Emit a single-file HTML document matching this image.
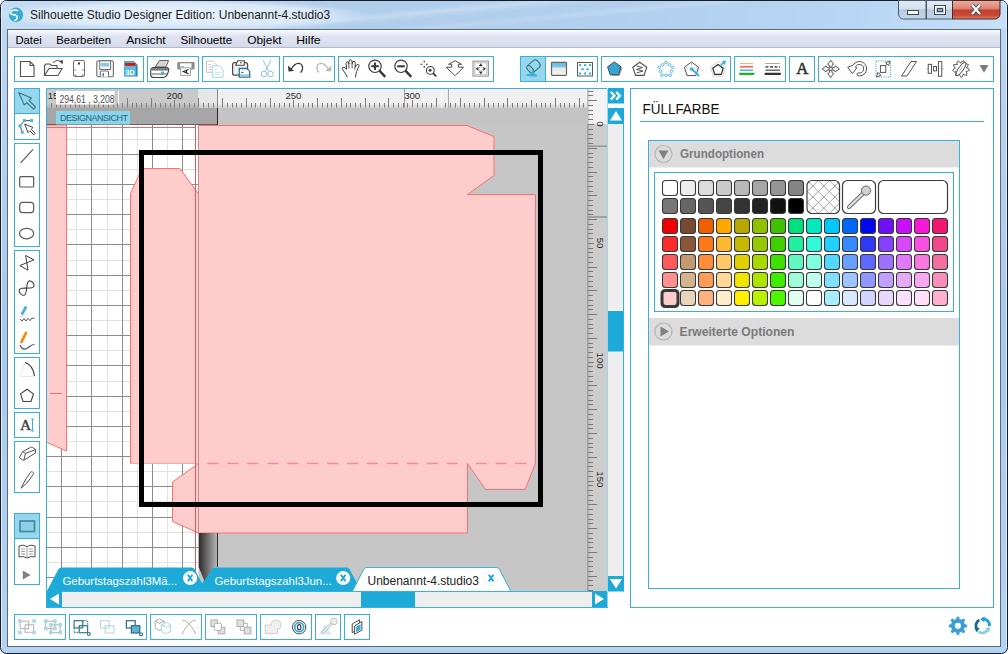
<!DOCTYPE html>
<html><head><meta charset="utf-8">
<style>
html,body{margin:0;padding:0;width:1008px;height:654px;overflow:hidden;background:#fff;}
body{position:relative;font-family:"Liberation Sans",sans-serif;}
svg{position:absolute;left:0;top:0;}
text{font-family:"Liberation Sans",sans-serif;}
</style></head><body>
<svg width="1008" height="654" viewBox="0 0 1008 654" shape-rendering="auto">
<defs>
<linearGradient id="frameG" x1="0" y1="0" x2="0" y2="1">
<stop offset="0" stop-color="#c2daf4"/><stop offset="0.05" stop-color="#bcd6f2"/><stop offset="0.5" stop-color="#a9c9ec"/><stop offset="1" stop-color="#b4d2f2"/>
</linearGradient>
<linearGradient id="titleG" x1="0" y1="0" x2="1" y2="0">
<stop offset="0" stop-color="#c4dcf4"/><stop offset="0.35" stop-color="#b0cdeb"/><stop offset="0.6" stop-color="#b2d0ee"/><stop offset="0.85" stop-color="#b8d6f4"/><stop offset="1" stop-color="#c8e0f8"/>
</linearGradient>
<linearGradient id="streakG" x1="0" y1="0" x2="1" y2="0.3" gradientUnits="objectBoundingBox">
<stop offset="0" stop-color="#fff" stop-opacity="0"/><stop offset="0.45" stop-color="#fff" stop-opacity="0"/><stop offset="0.5" stop-color="#fff" stop-opacity="0.25"/><stop offset="0.56" stop-color="#fff" stop-opacity="0"/>
<stop offset="0.62" stop-color="#fff" stop-opacity="0.0"/><stop offset="0.66" stop-color="#fff" stop-opacity="0.15"/><stop offset="0.7" stop-color="#fff" stop-opacity="0"/><stop offset="1" stop-color="#fff" stop-opacity="0"/>
</linearGradient>
<radialGradient id="glowG"><stop offset="0" stop-color="#f0f7fe" stop-opacity="0.9"/><stop offset="0.75" stop-color="#e6f1fc" stop-opacity="0.75"/><stop offset="1" stop-color="#e4f0fc" stop-opacity="0"/></radialGradient>
<linearGradient id="menuG" x1="0" y1="0" x2="0" y2="1">
<stop offset="0" stop-color="#fcfcfe"/><stop offset="0.35" stop-color="#dfe3f1"/><stop offset="1" stop-color="#d5daeb"/>
</linearGradient>
<linearGradient id="bladeG" x1="0" y1="0" x2="1" y2="0">
<stop offset="0" stop-color="#2a2a2a"/><stop offset="1" stop-color="#b8b8b8"/>
</linearGradient>
<linearGradient id="rulShadow" x1="0" y1="0" x2="0" y2="1">
<stop offset="0" stop-color="#000" stop-opacity="0"/><stop offset="1" stop-color="#000" stop-opacity="0.12"/>
</linearGradient>
<linearGradient id="vrulShadow" x1="0" y1="0" x2="1" y2="0">
<stop offset="0" stop-color="#000" stop-opacity="0.25"/><stop offset="1" stop-color="#000" stop-opacity="0"/>
</linearGradient>
<pattern id="hatch" width="11" height="11" patternUnits="userSpaceOnUse" x="812.8" y="186">
<rect width="11" height="11" fill="#fff"/><path d="M0 0L11 11M11 0L0 11" stroke="#8c8c8c" stroke-width="0.8"/>
</pattern>
<clipPath id="cvClip"><rect x="47" y="89" width="560" height="502"/></clipPath>
<clipPath id="pageClip"><rect x="47" y="125" width="540" height="466"/></clipPath>
</defs>

<rect x="0.5" y="0.5" width="1007" height="653" rx="6" fill="url(#frameG)" stroke="#141c26"/>
<rect x="1" y="1" width="1006" height="28" rx="5" fill="url(#titleG)"/>
<rect x="1" y="1" width="1006" height="28" rx="5" fill="url(#streakG)"/>
<ellipse cx="180" cy="15" rx="190" ry="15" fill="url(#glowG)"/>
<line x1="1.5" y1="6" x2="1.5" y2="648" stroke="#e2eefa"/>
<line x1="1006.5" y1="6" x2="1006.5" y2="648" stroke="#e2eefa"/>
<rect x="7.5" y="29.5" width="993" height="617" fill="#fff" stroke="#5a6a7a"/>
<circle cx="16" cy="14.8" r="7.2" fill="#3cadd2"/>
<path d="M17.6 10.5 C13.5 9.4 10.2 10.8 10.2 12.7 C10.4 14.3 13 14.7 15 15.1 C17.4 15.7 17.9 17.4 16.9 18.7 C16.3 19.5 15.6 20 15 20.4" stroke="#fff" stroke-width="1.5" fill="none" stroke-linecap="round"/>
<text x="30" y="18.7" font-size="12" fill="#1a1a1a">Silhouette Studio Designer Edition: Unbenannt-4.studio3</text>

<g>
<defs>
<linearGradient id="minG" x1="0" y1="0" x2="0" y2="1"><stop offset="0" stop-color="#e4ecf6"/><stop offset="0.45" stop-color="#d4e0ee"/><stop offset="0.5" stop-color="#b8cade"/><stop offset="1" stop-color="#c4d6ea"/></linearGradient>
<linearGradient id="closeG" x1="0" y1="0" x2="0" y2="1"><stop offset="0" stop-color="#eab0a4"/><stop offset="0.45" stop-color="#dc8070"/><stop offset="0.52" stop-color="#c4402c"/><stop offset="0.8" stop-color="#c84a34"/><stop offset="1" stop-color="#e08068"/></linearGradient>
</defs>
<path d="M898.5 0.5 V14 a5 5 0 0 0 5 5 H926 V0.5 Z" fill="url(#minG)" stroke="#4a5a6c"/>
<rect x="926.5" y="0.5" width="26" height="18.5" fill="url(#minG)" stroke="#4a5a6c"/>
<path d="M952.5 0.5 V19 H995 a5 5 0 0 0 5 -5 V0.5 Z" fill="url(#closeG)" stroke="#4a2a24"/>
<rect x="907.5" y="10.5" width="11" height="4" fill="#fff" stroke="#3c4a5a"/>
<rect x="934.5" y="5.5" width="11" height="9" fill="none" stroke="#3c4a5a" stroke-width="1"/>
<rect x="935.5" y="6.5" width="9" height="7" fill="none" stroke="#fff" stroke-width="1"/>
<rect x="937.5" y="8.5" width="5" height="3" fill="#9aaabc" stroke="#3c4a5a"/>
<path d="M972 5 L980 14 M980 5 L972 14" stroke="#3c3c4c" stroke-width="4"/>
<path d="M972 5 L980 14 M980 5 L972 14" stroke="#fff" stroke-width="2.4"/>
</g>

<rect x="8" y="30" width="992" height="18" fill="url(#menuG)"/>
<line x1="8" y1="47.5" x2="1000" y2="47.5" stroke="#b6bbcb"/>
<g font-size="11.3" fill="#000">
<text x="15.5" y="43.5" textLength="26.2" lengthAdjust="spacingAndGlyphs">Datei</text>
<text x="56.2" y="43.5" textLength="54.8" lengthAdjust="spacingAndGlyphs">Bearbeiten</text>
<text x="126.2" y="43.5" textLength="39.5" lengthAdjust="spacingAndGlyphs">Ansicht</text>
<text x="180.5" y="43.5" textLength="51.8" lengthAdjust="spacingAndGlyphs">Silhouette</text>
<text x="247.2" y="43.5" textLength="34.5" lengthAdjust="spacingAndGlyphs">Objekt</text>
<text x="296.2" y="43.5" textLength="24.5" lengthAdjust="spacingAndGlyphs">Hilfe</text>
</g>

<rect x="14.5" y="56.5" width="129" height="25" fill="none" stroke="#3aafd9"/>
<rect x="147.5" y="56.5" width="51" height="25" fill="none" stroke="#3aafd9"/>
<rect x="202.5" y="56.5" width="77" height="25" fill="none" stroke="#3aafd9"/>
<rect x="283.5" y="56.5" width="51" height="25" fill="none" stroke="#3aafd9"/>
<rect x="338.5" y="56.5" width="155" height="25" fill="none" stroke="#3aafd9"/>
<rect x="520.5" y="56.5" width="77" height="25" fill="none" stroke="#3aafd9"/>
<rect x="601.5" y="56.5" width="129" height="25" fill="none" stroke="#3aafd9"/>
<rect x="734.5" y="56.5" width="51" height="25" fill="none" stroke="#3aafd9"/>
<rect x="789.5" y="56.5" width="25" height="25" fill="none" stroke="#3aafd9"/>
<rect x="818.5" y="56.5" width="175" height="25" fill="none" stroke="#3aafd9"/>
<rect x="521" y="57" width="24" height="24" fill="#96d7ee"/><line x1="545.5" y1="57" x2="545.5" y2="81" stroke="#3aafd9"/>
<rect x="14.5" y="88.5" width="25" height="51" fill="none" stroke="#3aafd9"/>
<rect x="14.5" y="143.5" width="25" height="103" fill="none" stroke="#3aafd9"/>
<rect x="14.5" y="250.5" width="25" height="103" fill="none" stroke="#3aafd9"/>
<rect x="14.5" y="357.5" width="25" height="51" fill="none" stroke="#3aafd9"/>
<rect x="14.5" y="412.5" width="25" height="25" fill="none" stroke="#3aafd9"/>
<rect x="14.5" y="441.5" width="25" height="51" fill="none" stroke="#3aafd9"/>
<rect x="14.5" y="513.5" width="25" height="71" fill="none" stroke="#3aafd9"/>
<rect x="15" y="89" width="24" height="24" fill="#96d7ee"/><line x1="15" y1="113.5" x2="39" y2="113.5" stroke="#3aafd9"/>
<rect x="15" y="514" width="24" height="24" fill="#96d7ee"/><line x1="15" y1="538.5" x2="39" y2="538.5" stroke="#3aafd9"/>
<rect x="14.5" y="614.5" width="51" height="25" fill="none" stroke="#3aafd9"/>
<rect x="69.5" y="614.5" width="77" height="25" fill="none" stroke="#3aafd9"/>
<rect x="150.5" y="614.5" width="51" height="25" fill="none" stroke="#3aafd9"/>
<rect x="205.5" y="614.5" width="51" height="25" fill="none" stroke="#3aafd9"/>
<rect x="260.5" y="614.5" width="51" height="25" fill="none" stroke="#3aafd9"/>
<rect x="315.5" y="614.5" width="25" height="25" fill="none" stroke="#3aafd9"/>
<rect x="344.5" y="614.5" width="25" height="25" fill="none" stroke="#3aafd9"/>
<g clip-path="url(#cvClip)">
<rect x="47" y="89" width="560" height="502" fill="#c6c6c6"/>
<rect x="47" y="125" width="151.5" height="466" fill="#fff"/>
<g clip-path="url(#pageClip)">
<line x1="46.5" y1="125" x2="46.5" y2="591" stroke="#e2e2e2"/>
<line x1="76.5" y1="125" x2="76.5" y2="591" stroke="#e2e2e2"/>
<line x1="107.5" y1="125" x2="107.5" y2="591" stroke="#e2e2e2"/>
<line x1="137.5" y1="125" x2="137.5" y2="591" stroke="#e2e2e2"/>
<line x1="167.5" y1="125" x2="167.5" y2="591" stroke="#e2e2e2"/>
<line x1="198.5" y1="125" x2="198.5" y2="591" stroke="#e2e2e2"/>
<line x1="47" y1="139.5" x2="198.5" y2="139.5" stroke="#e2e2e2"/>
<line x1="47" y1="169.5" x2="198.5" y2="169.5" stroke="#e2e2e2"/>
<line x1="47" y1="199.5" x2="198.5" y2="199.5" stroke="#e2e2e2"/>
<line x1="47" y1="229.5" x2="198.5" y2="229.5" stroke="#e2e2e2"/>
<line x1="47" y1="260.5" x2="198.5" y2="260.5" stroke="#e2e2e2"/>
<line x1="47" y1="290.5" x2="198.5" y2="290.5" stroke="#e2e2e2"/>
<line x1="47" y1="320.5" x2="198.5" y2="320.5" stroke="#e2e2e2"/>
<line x1="47" y1="350.5" x2="198.5" y2="350.5" stroke="#e2e2e2"/>
<line x1="47" y1="381.5" x2="198.5" y2="381.5" stroke="#e2e2e2"/>
<line x1="47" y1="411.5" x2="198.5" y2="411.5" stroke="#e2e2e2"/>
<line x1="47" y1="441.5" x2="198.5" y2="441.5" stroke="#e2e2e2"/>
<line x1="47" y1="471.5" x2="198.5" y2="471.5" stroke="#e2e2e2"/>
<line x1="47" y1="501.5" x2="198.5" y2="501.5" stroke="#e2e2e2"/>
<line x1="47" y1="532.5" x2="198.5" y2="532.5" stroke="#e2e2e2"/>
<line x1="47" y1="562.5" x2="198.5" y2="562.5" stroke="#e2e2e2"/>
<line x1="61.5" y1="125" x2="61.5" y2="591" stroke="#8c8c8c"/>
<line x1="91.5" y1="125" x2="91.5" y2="591" stroke="#8c8c8c"/>
<line x1="122.5" y1="125" x2="122.5" y2="591" stroke="#8c8c8c"/>
<line x1="152.5" y1="125" x2="152.5" y2="591" stroke="#8c8c8c"/>
<line x1="182.5" y1="125" x2="182.5" y2="591" stroke="#8c8c8c"/>
<line x1="47" y1="124.5" x2="198.5" y2="124.5" stroke="#8c8c8c"/>
<line x1="47" y1="154.5" x2="198.5" y2="154.5" stroke="#8c8c8c"/>
<line x1="47" y1="184.5" x2="198.5" y2="184.5" stroke="#8c8c8c"/>
<line x1="47" y1="214.5" x2="198.5" y2="214.5" stroke="#8c8c8c"/>
<line x1="47" y1="244.5" x2="198.5" y2="244.5" stroke="#8c8c8c"/>
<line x1="47" y1="275.5" x2="198.5" y2="275.5" stroke="#8c8c8c"/>
<line x1="47" y1="305.5" x2="198.5" y2="305.5" stroke="#8c8c8c"/>
<line x1="47" y1="335.5" x2="198.5" y2="335.5" stroke="#8c8c8c"/>
<line x1="47" y1="365.5" x2="198.5" y2="365.5" stroke="#8c8c8c"/>
<line x1="47" y1="396.5" x2="198.5" y2="396.5" stroke="#8c8c8c"/>
<line x1="47" y1="426.5" x2="198.5" y2="426.5" stroke="#8c8c8c"/>
<line x1="47" y1="456.5" x2="198.5" y2="456.5" stroke="#8c8c8c"/>
<line x1="47" y1="486.5" x2="198.5" y2="486.5" stroke="#8c8c8c"/>
<line x1="47" y1="517.5" x2="198.5" y2="517.5" stroke="#8c8c8c"/>
<line x1="47" y1="547.5" x2="198.5" y2="547.5" stroke="#8c8c8c"/>
<line x1="47" y1="577.5" x2="198.5" y2="577.5" stroke="#8c8c8c"/>
</g>
<line x1="47" y1="124.5" x2="198" y2="124.5" stroke="#707070"/>
<path d="M40 125 H66.5 V451 L47 442.5 H40 Z" fill="#ffcccc" stroke="#ff7070" stroke-width="1"/>
<path d="M47 127.5 H195.5 V591" fill="none" stroke="#ff6060" stroke-width="1"/>
<line x1="50" y1="393.5" x2="62" y2="393.5" stroke="#ff7070" stroke-width="1"/>
<path d="M130.5 463.5 V193.5 L142 168.5 H180 L198.5 194 V463.5" fill="#ffcccc" stroke="#ff7070" stroke-width="1"/>
<line x1="130" y1="463.5" x2="198.5" y2="463.5" stroke="#ffa8a8" stroke-width="1"/>
<path d="M172.5 482 L198.5 463.5 V533 L172.5 521.5 Z" fill="#ffcccc" stroke="#ff7070" stroke-width="1"/>
<path d="M198.5 125.5 H467 L494 136.5 V175.5 L467.5 194.5 H535.5 V463.5 L525 489.5 H485.5 L467.5 463.5 V533 H198.5 Z" fill="#ffcccc" stroke="#ff7070" stroke-width="1"/>
<line x1="198.5" y1="125" x2="198.5" y2="533" stroke="#c09090" stroke-width="1"/>
<line x1="198.5" y1="463.5" x2="467.25" y2="463.5" stroke="#ff8a8a" stroke-width="1.4" stroke-dasharray="11 8.95" stroke-dashoffset="11"/>
<line x1="467.25" y1="463.5" x2="535" y2="463.5" stroke="#ff8a8a" stroke-width="1.4" stroke-dasharray="11 8.65" stroke-dashoffset="11"/>
<line x1="195.5" y1="125" x2="195.5" y2="591" stroke="#ff5050" stroke-width="1"/>
<rect x="141.5" y="152.5" width="399" height="352" fill="none" stroke="#000" stroke-width="5"/>
<rect x="47" y="89" width="540" height="19" fill="#f0f0f0"/>
<rect x="47" y="89" width="151.5" height="19" fill="#c9c9c9"/>
<rect x="198.5" y="89" width="19" height="19" fill="#e6e6e6"/>
<rect x="47" y="103" width="540" height="5" fill="url(#rulShadow)"/>
<line x1="51.5" y1="103" x2="51.5" y2="107.5" stroke="#7c7c7c"/>
<line x1="56.5" y1="100" x2="56.5" y2="107.5" stroke="#7c7c7c"/>
<line x1="60.5" y1="103" x2="60.5" y2="107.5" stroke="#7c7c7c"/>
<line x1="65.5" y1="103" x2="65.5" y2="107.5" stroke="#7c7c7c"/>
<line x1="70.5" y1="103" x2="70.5" y2="107.5" stroke="#7c7c7c"/>
<line x1="75.5" y1="103" x2="75.5" y2="107.5" stroke="#7c7c7c"/>
<line x1="79.5" y1="98" x2="79.5" y2="107.5" stroke="#7c7c7c"/>
<line x1="84.5" y1="103" x2="84.5" y2="107.5" stroke="#7c7c7c"/>
<line x1="89.5" y1="103" x2="89.5" y2="107.5" stroke="#7c7c7c"/>
<line x1="94.5" y1="103" x2="94.5" y2="107.5" stroke="#7c7c7c"/>
<line x1="98.5" y1="103" x2="98.5" y2="107.5" stroke="#7c7c7c"/>
<line x1="103.5" y1="98" x2="103.5" y2="107.5" stroke="#7c7c7c"/>
<line x1="108.5" y1="103" x2="108.5" y2="107.5" stroke="#7c7c7c"/>
<line x1="113.5" y1="103" x2="113.5" y2="107.5" stroke="#7c7c7c"/>
<line x1="117.5" y1="103" x2="117.5" y2="107.5" stroke="#7c7c7c"/>
<line x1="122.5" y1="103" x2="122.5" y2="107.5" stroke="#7c7c7c"/>
<line x1="127.5" y1="98" x2="127.5" y2="107.5" stroke="#7c7c7c"/>
<line x1="132.5" y1="103" x2="132.5" y2="107.5" stroke="#7c7c7c"/>
<line x1="136.5" y1="103" x2="136.5" y2="107.5" stroke="#7c7c7c"/>
<line x1="141.5" y1="103" x2="141.5" y2="107.5" stroke="#7c7c7c"/>
<line x1="146.5" y1="103" x2="146.5" y2="107.5" stroke="#7c7c7c"/>
<line x1="151.5" y1="98" x2="151.5" y2="107.5" stroke="#7c7c7c"/>
<line x1="155.5" y1="103" x2="155.5" y2="107.5" stroke="#7c7c7c"/>
<line x1="160.5" y1="103" x2="160.5" y2="107.5" stroke="#7c7c7c"/>
<line x1="165.5" y1="103" x2="165.5" y2="107.5" stroke="#7c7c7c"/>
<line x1="170.5" y1="103" x2="170.5" y2="107.5" stroke="#7c7c7c"/>
<line x1="174.5" y1="100" x2="174.5" y2="107.5" stroke="#7c7c7c"/>
<line x1="179.5" y1="103" x2="179.5" y2="107.5" stroke="#7c7c7c"/>
<line x1="184.5" y1="103" x2="184.5" y2="107.5" stroke="#7c7c7c"/>
<line x1="189.5" y1="103" x2="189.5" y2="107.5" stroke="#7c7c7c"/>
<line x1="194.5" y1="103" x2="194.5" y2="107.5" stroke="#7c7c7c"/>
<line x1="198.5" y1="98" x2="198.5" y2="107.5" stroke="#7c7c7c"/>
<line x1="203.5" y1="103" x2="203.5" y2="107.5" stroke="#7c7c7c"/>
<line x1="208.5" y1="103" x2="208.5" y2="107.5" stroke="#7c7c7c"/>
<line x1="213.5" y1="103" x2="213.5" y2="107.5" stroke="#7c7c7c"/>
<line x1="217.5" y1="103" x2="217.5" y2="107.5" stroke="#7c7c7c"/>
<line x1="222.5" y1="98" x2="222.5" y2="107.5" stroke="#7c7c7c"/>
<line x1="227.5" y1="103" x2="227.5" y2="107.5" stroke="#7c7c7c"/>
<line x1="232.5" y1="103" x2="232.5" y2="107.5" stroke="#7c7c7c"/>
<line x1="236.5" y1="103" x2="236.5" y2="107.5" stroke="#7c7c7c"/>
<line x1="241.5" y1="103" x2="241.5" y2="107.5" stroke="#7c7c7c"/>
<line x1="246.5" y1="98" x2="246.5" y2="107.5" stroke="#7c7c7c"/>
<line x1="251.5" y1="103" x2="251.5" y2="107.5" stroke="#7c7c7c"/>
<line x1="255.5" y1="103" x2="255.5" y2="107.5" stroke="#7c7c7c"/>
<line x1="260.5" y1="103" x2="260.5" y2="107.5" stroke="#7c7c7c"/>
<line x1="265.5" y1="103" x2="265.5" y2="107.5" stroke="#7c7c7c"/>
<line x1="270.5" y1="98" x2="270.5" y2="107.5" stroke="#7c7c7c"/>
<line x1="274.5" y1="103" x2="274.5" y2="107.5" stroke="#7c7c7c"/>
<line x1="279.5" y1="103" x2="279.5" y2="107.5" stroke="#7c7c7c"/>
<line x1="284.5" y1="103" x2="284.5" y2="107.5" stroke="#7c7c7c"/>
<line x1="289.5" y1="103" x2="289.5" y2="107.5" stroke="#7c7c7c"/>
<line x1="293.5" y1="100" x2="293.5" y2="107.5" stroke="#7c7c7c"/>
<line x1="298.5" y1="103" x2="298.5" y2="107.5" stroke="#7c7c7c"/>
<line x1="303.5" y1="103" x2="303.5" y2="107.5" stroke="#7c7c7c"/>
<line x1="308.5" y1="103" x2="308.5" y2="107.5" stroke="#7c7c7c"/>
<line x1="312.5" y1="103" x2="312.5" y2="107.5" stroke="#7c7c7c"/>
<line x1="317.5" y1="98" x2="317.5" y2="107.5" stroke="#7c7c7c"/>
<line x1="322.5" y1="103" x2="322.5" y2="107.5" stroke="#7c7c7c"/>
<line x1="327.5" y1="103" x2="327.5" y2="107.5" stroke="#7c7c7c"/>
<line x1="331.5" y1="103" x2="331.5" y2="107.5" stroke="#7c7c7c"/>
<line x1="336.5" y1="103" x2="336.5" y2="107.5" stroke="#7c7c7c"/>
<line x1="341.5" y1="98" x2="341.5" y2="107.5" stroke="#7c7c7c"/>
<line x1="346.5" y1="103" x2="346.5" y2="107.5" stroke="#7c7c7c"/>
<line x1="350.5" y1="103" x2="350.5" y2="107.5" stroke="#7c7c7c"/>
<line x1="355.5" y1="103" x2="355.5" y2="107.5" stroke="#7c7c7c"/>
<line x1="360.5" y1="103" x2="360.5" y2="107.5" stroke="#7c7c7c"/>
<line x1="365.5" y1="98" x2="365.5" y2="107.5" stroke="#7c7c7c"/>
<line x1="369.5" y1="103" x2="369.5" y2="107.5" stroke="#7c7c7c"/>
<line x1="374.5" y1="103" x2="374.5" y2="107.5" stroke="#7c7c7c"/>
<line x1="379.5" y1="103" x2="379.5" y2="107.5" stroke="#7c7c7c"/>
<line x1="384.5" y1="103" x2="384.5" y2="107.5" stroke="#7c7c7c"/>
<line x1="388.5" y1="98" x2="388.5" y2="107.5" stroke="#7c7c7c"/>
<line x1="393.5" y1="103" x2="393.5" y2="107.5" stroke="#7c7c7c"/>
<line x1="398.5" y1="103" x2="398.5" y2="107.5" stroke="#7c7c7c"/>
<line x1="403.5" y1="103" x2="403.5" y2="107.5" stroke="#7c7c7c"/>
<line x1="407.5" y1="103" x2="407.5" y2="107.5" stroke="#7c7c7c"/>
<line x1="412.5" y1="100" x2="412.5" y2="107.5" stroke="#7c7c7c"/>
<line x1="417.5" y1="103" x2="417.5" y2="107.5" stroke="#7c7c7c"/>
<line x1="422.5" y1="103" x2="422.5" y2="107.5" stroke="#7c7c7c"/>
<line x1="426.5" y1="103" x2="426.5" y2="107.5" stroke="#7c7c7c"/>
<line x1="431.5" y1="103" x2="431.5" y2="107.5" stroke="#7c7c7c"/>
<line x1="436.5" y1="98" x2="436.5" y2="107.5" stroke="#7c7c7c"/>
<line x1="441.5" y1="103" x2="441.5" y2="107.5" stroke="#7c7c7c"/>
<line x1="445.5" y1="103" x2="445.5" y2="107.5" stroke="#7c7c7c"/>
<line x1="450.5" y1="103" x2="450.5" y2="107.5" stroke="#7c7c7c"/>
<line x1="455.5" y1="103" x2="455.5" y2="107.5" stroke="#7c7c7c"/>
<line x1="460.5" y1="98" x2="460.5" y2="107.5" stroke="#7c7c7c"/>
<line x1="464.5" y1="103" x2="464.5" y2="107.5" stroke="#7c7c7c"/>
<line x1="469.5" y1="103" x2="469.5" y2="107.5" stroke="#7c7c7c"/>
<line x1="474.5" y1="103" x2="474.5" y2="107.5" stroke="#7c7c7c"/>
<line x1="479.5" y1="103" x2="479.5" y2="107.5" stroke="#7c7c7c"/>
<line x1="484.5" y1="98" x2="484.5" y2="107.5" stroke="#7c7c7c"/>
<line x1="488.5" y1="103" x2="488.5" y2="107.5" stroke="#7c7c7c"/>
<line x1="493.5" y1="103" x2="493.5" y2="107.5" stroke="#7c7c7c"/>
<line x1="498.5" y1="103" x2="498.5" y2="107.5" stroke="#7c7c7c"/>
<line x1="503.5" y1="103" x2="503.5" y2="107.5" stroke="#7c7c7c"/>
<line x1="507.5" y1="98" x2="507.5" y2="107.5" stroke="#7c7c7c"/>
<line x1="512.5" y1="103" x2="512.5" y2="107.5" stroke="#7c7c7c"/>
<line x1="517.5" y1="103" x2="517.5" y2="107.5" stroke="#7c7c7c"/>
<line x1="522.5" y1="103" x2="522.5" y2="107.5" stroke="#7c7c7c"/>
<line x1="526.5" y1="103" x2="526.5" y2="107.5" stroke="#7c7c7c"/>
<line x1="531.5" y1="100" x2="531.5" y2="107.5" stroke="#7c7c7c"/>
<line x1="536.5" y1="103" x2="536.5" y2="107.5" stroke="#7c7c7c"/>
<line x1="541.5" y1="103" x2="541.5" y2="107.5" stroke="#7c7c7c"/>
<line x1="545.5" y1="103" x2="545.5" y2="107.5" stroke="#7c7c7c"/>
<line x1="550.5" y1="103" x2="550.5" y2="107.5" stroke="#7c7c7c"/>
<line x1="555.5" y1="98" x2="555.5" y2="107.5" stroke="#7c7c7c"/>
<line x1="560.5" y1="103" x2="560.5" y2="107.5" stroke="#7c7c7c"/>
<line x1="564.5" y1="103" x2="564.5" y2="107.5" stroke="#7c7c7c"/>
<line x1="569.5" y1="103" x2="569.5" y2="107.5" stroke="#7c7c7c"/>
<line x1="574.5" y1="103" x2="574.5" y2="107.5" stroke="#7c7c7c"/>
<line x1="579.5" y1="98" x2="579.5" y2="107.5" stroke="#7c7c7c"/>
<line x1="583.5" y1="103" x2="583.5" y2="107.5" stroke="#7c7c7c"/>
<line x1="588.5" y1="103" x2="588.5" y2="107.5" stroke="#7c7c7c"/>
<line x1="404.5" y1="89" x2="404.5" y2="108" stroke="#a0a0a0"/><line x1="441.5" y1="89" x2="441.5" y2="108" stroke="#fff"/><line x1="448.5" y1="89" x2="448.5" y2="108" stroke="#a8a8a8"/>
<g font-size="9.6" fill="#2a2a2a" text-anchor="middle">
<text x="174.6" y="99" >200</text>
<text x="293.4" y="99" >250</text>
<text x="412.2" y="99" >300</text>
<text x="55.8" y="99" >150</text>
</g>
<rect x="47" y="108" width="540" height="17" fill="#c4c4c4"/>
<rect x="47" y="108" width="170.5" height="16" fill="#a6a6a6"/>
<line x1="47" y1="124.5" x2="217" y2="124.5" stroke="#606060"/>
<line x1="217.5" y1="89" x2="217.5" y2="108" stroke="#8a8a8a"/>
<line x1="217.5" y1="108" x2="217.5" y2="125" stroke="#282828"/>
<rect x="56" y="91" width="58.5" height="13.5" fill="#fff"/>
<line x1="118.5" y1="91" x2="118.5" y2="104.5" stroke="#fff"/>
<text x="59.5" y="103" font-size="10" fill="#505050" textLength="55" lengthAdjust="spacingAndGlyphs">294,61 , 3,208</text>
<rect x="56" y="111" width="74" height="13.5" fill="#8ad4ec"/>
<text x="60" y="121" font-size="9" fill="#2a6272" textLength="68" lengthAdjust="spacing">DESIGNANSICHT</text>
<rect x="587" y="89" width="20" height="502" fill="#cdcdcd"/>
<rect x="587" y="89" width="20" height="35" fill="#f3f3f3"/>
<rect x="587" y="89" width="3" height="502" fill="url(#vrulShadow)"/>
<line x1="588" y1="91.5" x2="593" y2="91.5" stroke="#787878"/>
<line x1="588" y1="95.5" x2="593" y2="95.5" stroke="#787878"/>
<line x1="588" y1="100.5" x2="597" y2="100.5" stroke="#787878"/>
<line x1="588" y1="105.5" x2="593" y2="105.5" stroke="#787878"/>
<line x1="588" y1="110.5" x2="593" y2="110.5" stroke="#787878"/>
<line x1="588" y1="114.5" x2="593" y2="114.5" stroke="#787878"/>
<line x1="588" y1="119.5" x2="593" y2="119.5" stroke="#787878"/>
<line x1="588" y1="124.5" x2="594" y2="124.5" stroke="#787878"/>
<line x1="588" y1="129.5" x2="593" y2="129.5" stroke="#787878"/>
<line x1="588" y1="134.5" x2="593" y2="134.5" stroke="#787878"/>
<line x1="588" y1="138.5" x2="593" y2="138.5" stroke="#787878"/>
<line x1="588" y1="143.5" x2="593" y2="143.5" stroke="#787878"/>
<line x1="588" y1="148.5" x2="597" y2="148.5" stroke="#787878"/>
<line x1="588" y1="153.5" x2="593" y2="153.5" stroke="#787878"/>
<line x1="588" y1="157.5" x2="593" y2="157.5" stroke="#787878"/>
<line x1="588" y1="162.5" x2="593" y2="162.5" stroke="#787878"/>
<line x1="588" y1="167.5" x2="593" y2="167.5" stroke="#787878"/>
<line x1="588" y1="172.5" x2="597" y2="172.5" stroke="#787878"/>
<line x1="588" y1="176.5" x2="593" y2="176.5" stroke="#787878"/>
<line x1="588" y1="181.5" x2="593" y2="181.5" stroke="#787878"/>
<line x1="588" y1="186.5" x2="593" y2="186.5" stroke="#787878"/>
<line x1="588" y1="191.5" x2="593" y2="191.5" stroke="#787878"/>
<line x1="588" y1="195.5" x2="597" y2="195.5" stroke="#787878"/>
<line x1="588" y1="200.5" x2="593" y2="200.5" stroke="#787878"/>
<line x1="588" y1="205.5" x2="593" y2="205.5" stroke="#787878"/>
<line x1="588" y1="210.5" x2="593" y2="210.5" stroke="#787878"/>
<line x1="588" y1="214.5" x2="593" y2="214.5" stroke="#787878"/>
<line x1="588" y1="219.5" x2="597" y2="219.5" stroke="#787878"/>
<line x1="588" y1="224.5" x2="593" y2="224.5" stroke="#787878"/>
<line x1="588" y1="229.5" x2="593" y2="229.5" stroke="#787878"/>
<line x1="588" y1="233.5" x2="593" y2="233.5" stroke="#787878"/>
<line x1="588" y1="238.5" x2="593" y2="238.5" stroke="#787878"/>
<line x1="588" y1="243.5" x2="594" y2="243.5" stroke="#787878"/>
<line x1="588" y1="248.5" x2="593" y2="248.5" stroke="#787878"/>
<line x1="588" y1="252.5" x2="593" y2="252.5" stroke="#787878"/>
<line x1="588" y1="257.5" x2="593" y2="257.5" stroke="#787878"/>
<line x1="588" y1="262.5" x2="593" y2="262.5" stroke="#787878"/>
<line x1="588" y1="267.5" x2="597" y2="267.5" stroke="#787878"/>
<line x1="588" y1="271.5" x2="593" y2="271.5" stroke="#787878"/>
<line x1="588" y1="276.5" x2="593" y2="276.5" stroke="#787878"/>
<line x1="588" y1="281.5" x2="593" y2="281.5" stroke="#787878"/>
<line x1="588" y1="286.5" x2="593" y2="286.5" stroke="#787878"/>
<line x1="588" y1="290.5" x2="597" y2="290.5" stroke="#787878"/>
<line x1="588" y1="295.5" x2="593" y2="295.5" stroke="#787878"/>
<line x1="588" y1="300.5" x2="593" y2="300.5" stroke="#787878"/>
<line x1="588" y1="305.5" x2="593" y2="305.5" stroke="#787878"/>
<line x1="588" y1="309.5" x2="593" y2="309.5" stroke="#787878"/>
<line x1="588" y1="314.5" x2="597" y2="314.5" stroke="#787878"/>
<line x1="588" y1="319.5" x2="593" y2="319.5" stroke="#787878"/>
<line x1="588" y1="324.5" x2="593" y2="324.5" stroke="#787878"/>
<line x1="588" y1="328.5" x2="593" y2="328.5" stroke="#787878"/>
<line x1="588" y1="333.5" x2="593" y2="333.5" stroke="#787878"/>
<line x1="588" y1="338.5" x2="597" y2="338.5" stroke="#787878"/>
<line x1="588" y1="343.5" x2="593" y2="343.5" stroke="#787878"/>
<line x1="588" y1="347.5" x2="593" y2="347.5" stroke="#787878"/>
<line x1="588" y1="352.5" x2="593" y2="352.5" stroke="#787878"/>
<line x1="588" y1="357.5" x2="593" y2="357.5" stroke="#787878"/>
<line x1="588" y1="362.5" x2="594" y2="362.5" stroke="#787878"/>
<line x1="588" y1="366.5" x2="593" y2="366.5" stroke="#787878"/>
<line x1="588" y1="371.5" x2="593" y2="371.5" stroke="#787878"/>
<line x1="588" y1="376.5" x2="593" y2="376.5" stroke="#787878"/>
<line x1="588" y1="381.5" x2="593" y2="381.5" stroke="#787878"/>
<line x1="588" y1="385.5" x2="597" y2="385.5" stroke="#787878"/>
<line x1="588" y1="390.5" x2="593" y2="390.5" stroke="#787878"/>
<line x1="588" y1="395.5" x2="593" y2="395.5" stroke="#787878"/>
<line x1="588" y1="400.5" x2="593" y2="400.5" stroke="#787878"/>
<line x1="588" y1="404.5" x2="593" y2="404.5" stroke="#787878"/>
<line x1="588" y1="409.5" x2="597" y2="409.5" stroke="#787878"/>
<line x1="588" y1="414.5" x2="593" y2="414.5" stroke="#787878"/>
<line x1="588" y1="419.5" x2="593" y2="419.5" stroke="#787878"/>
<line x1="588" y1="424.5" x2="593" y2="424.5" stroke="#787878"/>
<line x1="588" y1="428.5" x2="593" y2="428.5" stroke="#787878"/>
<line x1="588" y1="433.5" x2="597" y2="433.5" stroke="#787878"/>
<line x1="588" y1="438.5" x2="593" y2="438.5" stroke="#787878"/>
<line x1="588" y1="443.5" x2="593" y2="443.5" stroke="#787878"/>
<line x1="588" y1="447.5" x2="593" y2="447.5" stroke="#787878"/>
<line x1="588" y1="452.5" x2="593" y2="452.5" stroke="#787878"/>
<line x1="588" y1="457.5" x2="597" y2="457.5" stroke="#787878"/>
<line x1="588" y1="462.5" x2="593" y2="462.5" stroke="#787878"/>
<line x1="588" y1="466.5" x2="593" y2="466.5" stroke="#787878"/>
<line x1="588" y1="471.5" x2="593" y2="471.5" stroke="#787878"/>
<line x1="588" y1="476.5" x2="593" y2="476.5" stroke="#787878"/>
<line x1="588" y1="481.5" x2="594" y2="481.5" stroke="#787878"/>
<line x1="588" y1="485.5" x2="593" y2="485.5" stroke="#787878"/>
<line x1="588" y1="490.5" x2="593" y2="490.5" stroke="#787878"/>
<line x1="588" y1="495.5" x2="593" y2="495.5" stroke="#787878"/>
<line x1="588" y1="500.5" x2="593" y2="500.5" stroke="#787878"/>
<line x1="588" y1="504.5" x2="597" y2="504.5" stroke="#787878"/>
<line x1="588" y1="509.5" x2="593" y2="509.5" stroke="#787878"/>
<line x1="588" y1="514.5" x2="593" y2="514.5" stroke="#787878"/>
<line x1="588" y1="519.5" x2="593" y2="519.5" stroke="#787878"/>
<line x1="588" y1="523.5" x2="593" y2="523.5" stroke="#787878"/>
<line x1="588" y1="528.5" x2="597" y2="528.5" stroke="#787878"/>
<line x1="588" y1="533.5" x2="593" y2="533.5" stroke="#787878"/>
<line x1="588" y1="538.5" x2="593" y2="538.5" stroke="#787878"/>
<line x1="588" y1="542.5" x2="593" y2="542.5" stroke="#787878"/>
<line x1="588" y1="547.5" x2="593" y2="547.5" stroke="#787878"/>
<line x1="588" y1="552.5" x2="597" y2="552.5" stroke="#787878"/>
<line x1="588" y1="557.5" x2="593" y2="557.5" stroke="#787878"/>
<line x1="588" y1="561.5" x2="593" y2="561.5" stroke="#787878"/>
<line x1="588" y1="566.5" x2="593" y2="566.5" stroke="#787878"/>
<line x1="588" y1="571.5" x2="593" y2="571.5" stroke="#787878"/>
<line x1="588" y1="576.5" x2="597" y2="576.5" stroke="#787878"/>
<line x1="588" y1="580.5" x2="593" y2="580.5" stroke="#787878"/>
<line x1="588" y1="585.5" x2="593" y2="585.5" stroke="#787878"/>
<line x1="588" y1="590.5" x2="593" y2="590.5" stroke="#787878"/>
<rect x="588" y="145.5" width="19" height="1.5" fill="#989898"/><rect x="588" y="216.2" width="19" height="1.6" fill="#989898"/>
<text transform="translate(597.2,124) rotate(90)" font-size="9.6" fill="#2a2a2a" text-anchor="middle">0</text>
<text transform="translate(597.2,243) rotate(90)" font-size="9.6" fill="#2a2a2a" text-anchor="middle">50</text>
<text transform="translate(597.2,360.5) rotate(90)" font-size="9.6" fill="#2a2a2a" text-anchor="middle">100</text>
<text transform="translate(597.2,479.3) rotate(90)" font-size="9.6" fill="#2a2a2a" text-anchor="middle">150</text>
</g>
<path d="M46.5 607.5 V88.5 H607.5 V591" fill="none" stroke="#3aafd9"/>
<path d="M47 591 L58.3 569.2 Q59.3 567.5 61.3 567.5 H191.6 Q193.6 567.5 194.6 569.2 L206 591 Z" fill="#1eaad9"/>
<path d="M198.3 591 L209.60000000000002 569.2 Q210.60000000000002 567.5 212.60000000000002 567.5 H346.6 Q348.6 567.5 349.6 569.2 L361 591 Z" fill="#1eaad9"/>
<path d="M352.5 591 L363.8 569.2 Q364.8 567.5 366.8 567.5 H496.3 Q498.3 567.5 499.3 569.2 L510.7 591" fill="#fff" stroke="#3aafd9"/>
<path d="M198.75 533 H217.5 V567 H213.2 L204.3 580.8 L198.75 567 Z" fill="url(#bladeG)"/>
<line x1="217.5" y1="533" x2="217.5" y2="567" stroke="#303030"/>
<g font-size="11.4" fill="#fff"><text x="62.5" y="584.5">Geburtstagszahl3Mä...</text><text x="214.5" y="584.5">Geburtstagszahl3Jun...</text></g>
<text x="367.5" y="584.5" font-size="12" fill="#222">Unbenannt-4.studio3</text>
<circle cx="190.1" cy="578.1" r="7" fill="#fff"/>
<path d="M187.79999999999998 574.7 L192.4 581.3000000000001 M192.4 574.7 L187.79999999999998 581.3000000000001" stroke="#1eaad9" stroke-width="2"/>
<circle cx="343.2" cy="578.1" r="7" fill="#fff"/>
<path d="M340.9 574.7 L345.5 581.3000000000001 M345.5 574.7 L340.9 581.3000000000001" stroke="#1eaad9" stroke-width="2"/>
<circle cx="491.1" cy="578.8000000000001" r="7.1" fill="#e8e8e8"/><circle cx="491.1" cy="578.2" r="7" fill="#fff" stroke="#eeeeee" stroke-width="0.8"/>
<path d="M488.8 574.8000000000001 L493.40000000000003 581.4000000000001 M493.40000000000003 574.8000000000001 L488.8 581.4000000000001" stroke="#1eaad9" stroke-width="2"/>
<rect x="47" y="591" width="560" height="16" fill="#eeeeee"/>
<line x1="47" y1="591.5" x2="607" y2="591.5" stroke="#3aafd9"/>
<rect x="47" y="591" width="15" height="16" fill="#1eaad9"/>
<rect x="592" y="591" width="15.5" height="16" fill="#1eaad9"/>
<rect x="361" y="592" width="54" height="15" fill="#1eaad9"/>
<path d="M50 599 L59 593.5 V604.5 Z" fill="#fff"/>
<path d="M604 599 L595 593.5 V604.5 Z" fill="#fff"/>
<line x1="46" y1="607.5" x2="608" y2="607.5" stroke="#3aafd9"/>
<rect x="607.5" y="88" width="16" height="503.5" fill="#fff"/>
<rect x="608" y="124" width="15" height="452" fill="#eeeeee"/>
<line x1="623.5" y1="108" x2="623.5" y2="591.5" stroke="#3aafd9"/>
<rect x="608" y="88" width="16" height="15.5" fill="#1eaad9"/>
<rect x="608" y="108" width="16" height="16" fill="#1eaad9"/>
<rect x="608" y="576" width="16" height="15.5" fill="#1eaad9"/>
<rect x="608" y="311" width="15" height="40.5" fill="#1eaad9"/>
<path d="M616 111 L622 120.5 H610 Z" fill="#fff"/>
<path d="M616 588.5 L622 579 H610 Z" fill="#fff"/>
<path d="M610.8 92 L614.4 95.8 L610.8 99.6 M616.2 92 L619.8 95.8 L616.2 99.6" stroke="#fff" stroke-width="2.3" fill="none"/>
<rect x="630.5" y="88.5" width="363" height="519" fill="#fff" stroke="#3aafd9"/>
<text x="642.5" y="113.8" font-size="15" fill="#111" textLength="77" lengthAdjust="spacingAndGlyphs">FÜLLFARBE</text>
<line x1="640" y1="121.5" x2="984" y2="121.5" stroke="#3aafd9"/>
<rect x="648.5" y="140.5" width="311" height="448" fill="#fff" stroke="#3aafd9"/>
<rect x="649" y="141" width="310" height="26.5" fill="#dcdcdc"/>
<rect x="649" y="318" width="310" height="27.5" fill="#dcdcdc"/>
<text x="680" y="158" font-size="12.2" font-weight="bold" fill="#7a7a7a" textLength="84" lengthAdjust="spacingAndGlyphs">Grundoptionen</text>
<text x="679.6" y="336" font-size="12.2" font-weight="bold" fill="#7a7a7a" textLength="114.8" lengthAdjust="spacingAndGlyphs">Erweiterte Optionen</text>
<circle cx="663.5" cy="154" r="8.5" fill="none" stroke="#b4b4b4" stroke-width="1.2"/>
<path d="M658.5 150.5 H668.5 L663.5 159 Z" fill="#808080"/>
<circle cx="663.5" cy="331.5" r="8.5" fill="none" stroke="#b4b4b4" stroke-width="1.2"/>
<path d="M660.5 326.5 V336.5 L669 331.5 Z" fill="#808080"/>
<rect x="654.5" y="172.5" width="299" height="139" fill="#fff" stroke="#3aafd9"/>

<rect x="662.5" y="180.5" width="15" height="15" rx="3" fill="#ffffff" stroke="#383838" stroke-width="1.05"/>
<rect x="680.5" y="180.5" width="15" height="15" rx="3" fill="#ececec" stroke="#383838" stroke-width="1.05"/>
<rect x="698.5" y="180.5" width="15" height="15" rx="3" fill="#dcdcdc" stroke="#383838" stroke-width="1.05"/>
<rect x="716.5" y="180.5" width="15" height="15" rx="3" fill="#cacaca" stroke="#383838" stroke-width="1.05"/>
<rect x="734.5" y="180.5" width="15" height="15" rx="3" fill="#b8b8b8" stroke="#383838" stroke-width="1.05"/>
<rect x="752.5" y="180.5" width="15" height="15" rx="3" fill="#a6a6a6" stroke="#383838" stroke-width="1.05"/>
<rect x="770.5" y="180.5" width="15" height="15" rx="3" fill="#959595" stroke="#383838" stroke-width="1.05"/>
<rect x="788.5" y="180.5" width="15" height="15" rx="3" fill="#838383" stroke="#383838" stroke-width="1.05"/>
<rect x="662.5" y="198.5" width="15" height="15" rx="3" fill="#777777" stroke="#383838" stroke-width="1.05"/>
<rect x="680.5" y="198.5" width="15" height="15" rx="3" fill="#666666" stroke="#383838" stroke-width="1.05"/>
<rect x="698.5" y="198.5" width="15" height="15" rx="3" fill="#555555" stroke="#383838" stroke-width="1.05"/>
<rect x="716.5" y="198.5" width="15" height="15" rx="3" fill="#444444" stroke="#383838" stroke-width="1.05"/>
<rect x="734.5" y="198.5" width="15" height="15" rx="3" fill="#333333" stroke="#383838" stroke-width="1.05"/>
<rect x="752.5" y="198.5" width="15" height="15" rx="3" fill="#222222" stroke="#383838" stroke-width="1.05"/>
<rect x="770.5" y="198.5" width="15" height="15" rx="3" fill="#111111" stroke="#383838" stroke-width="1.05"/>
<rect x="788.5" y="198.5" width="15" height="15" rx="3" fill="#000000" stroke="#383838" stroke-width="1.05"/>
<rect x="662.5" y="218.5" width="15" height="15" rx="3" fill="#f00000" stroke="#383838" stroke-width="1.05"/>
<rect x="662.5" y="236.5" width="15" height="15" rx="3" fill="#ff2a2a" stroke="#383838" stroke-width="1.05"/>
<rect x="662.5" y="254.5" width="15" height="15" rx="3" fill="#ff5a5a" stroke="#383838" stroke-width="1.05"/>
<rect x="662.5" y="272.5" width="15" height="15" rx="3" fill="#ff9090" stroke="#383838" stroke-width="1.05"/>
<rect x="662.5" y="290.5" width="15" height="15" rx="3" fill="#ffcccc" stroke="#383838" stroke-width="1.05"/>
<rect x="680.5" y="218.5" width="15" height="15" rx="3" fill="#784830" stroke="#383838" stroke-width="1.05"/>
<rect x="680.5" y="236.5" width="15" height="15" rx="3" fill="#8a5838" stroke="#383838" stroke-width="1.05"/>
<rect x="680.5" y="254.5" width="15" height="15" rx="3" fill="#c49a70" stroke="#383838" stroke-width="1.05"/>
<rect x="680.5" y="272.5" width="15" height="15" rx="3" fill="#d4b48c" stroke="#383838" stroke-width="1.05"/>
<rect x="680.5" y="290.5" width="15" height="15" rx="3" fill="#e8d4b8" stroke="#383838" stroke-width="1.05"/>
<rect x="698.5" y="218.5" width="15" height="15" rx="3" fill="#f06000" stroke="#383838" stroke-width="1.05"/>
<rect x="698.5" y="236.5" width="15" height="15" rx="3" fill="#ff7818" stroke="#383838" stroke-width="1.05"/>
<rect x="698.5" y="254.5" width="15" height="15" rx="3" fill="#ff8c3a" stroke="#383838" stroke-width="1.05"/>
<rect x="698.5" y="272.5" width="15" height="15" rx="3" fill="#ff9c58" stroke="#383838" stroke-width="1.05"/>
<rect x="698.5" y="290.5" width="15" height="15" rx="3" fill="#ffb07c" stroke="#383838" stroke-width="1.05"/>
<rect x="716.5" y="218.5" width="15" height="15" rx="3" fill="#ffa800" stroke="#383838" stroke-width="1.05"/>
<rect x="716.5" y="236.5" width="15" height="15" rx="3" fill="#ffb830" stroke="#383838" stroke-width="1.05"/>
<rect x="716.5" y="254.5" width="15" height="15" rx="3" fill="#ffc868" stroke="#383838" stroke-width="1.05"/>
<rect x="716.5" y="272.5" width="15" height="15" rx="3" fill="#ffd898" stroke="#383838" stroke-width="1.05"/>
<rect x="716.5" y="290.5" width="15" height="15" rx="3" fill="#ffeccc" stroke="#383838" stroke-width="1.05"/>
<rect x="734.5" y="218.5" width="15" height="15" rx="3" fill="#b8a800" stroke="#383838" stroke-width="1.05"/>
<rect x="734.5" y="236.5" width="15" height="15" rx="3" fill="#c8b800" stroke="#383838" stroke-width="1.05"/>
<rect x="734.5" y="254.5" width="15" height="15" rx="3" fill="#e0d000" stroke="#383838" stroke-width="1.05"/>
<rect x="734.5" y="272.5" width="15" height="15" rx="3" fill="#f0e400" stroke="#383838" stroke-width="1.05"/>
<rect x="734.5" y="290.5" width="15" height="15" rx="3" fill="#fff000" stroke="#383838" stroke-width="1.05"/>
<rect x="752.5" y="218.5" width="15" height="15" rx="3" fill="#90c000" stroke="#383838" stroke-width="1.05"/>
<rect x="752.5" y="236.5" width="15" height="15" rx="3" fill="#98c800" stroke="#383838" stroke-width="1.05"/>
<rect x="752.5" y="254.5" width="15" height="15" rx="3" fill="#a8d800" stroke="#383838" stroke-width="1.05"/>
<rect x="752.5" y="272.5" width="15" height="15" rx="3" fill="#b0e400" stroke="#383838" stroke-width="1.05"/>
<rect x="752.5" y="290.5" width="15" height="15" rx="3" fill="#b8f000" stroke="#383838" stroke-width="1.05"/>
<rect x="770.5" y="218.5" width="15" height="15" rx="3" fill="#40c000" stroke="#383838" stroke-width="1.05"/>
<rect x="770.5" y="236.5" width="15" height="15" rx="3" fill="#40d000" stroke="#383838" stroke-width="1.05"/>
<rect x="770.5" y="254.5" width="15" height="15" rx="3" fill="#40e000" stroke="#383838" stroke-width="1.05"/>
<rect x="770.5" y="272.5" width="15" height="15" rx="3" fill="#40ec00" stroke="#383838" stroke-width="1.05"/>
<rect x="770.5" y="290.5" width="15" height="15" rx="3" fill="#50f800" stroke="#383838" stroke-width="1.05"/>
<rect x="788.5" y="218.5" width="15" height="15" rx="3" fill="#00e080" stroke="#383838" stroke-width="1.05"/>
<rect x="788.5" y="236.5" width="15" height="15" rx="3" fill="#20f0a0" stroke="#383838" stroke-width="1.05"/>
<rect x="788.5" y="254.5" width="15" height="15" rx="3" fill="#60f8c0" stroke="#383838" stroke-width="1.05"/>
<rect x="788.5" y="272.5" width="15" height="15" rx="3" fill="#a0fcd8" stroke="#383838" stroke-width="1.05"/>
<rect x="788.5" y="290.5" width="15" height="15" rx="3" fill="#e0fff0" stroke="#383838" stroke-width="1.05"/>
<rect x="806.5" y="218.5" width="15" height="15" rx="3" fill="#00e8c0" stroke="#383838" stroke-width="1.05"/>
<rect x="806.5" y="236.5" width="15" height="15" rx="3" fill="#30f8d8" stroke="#383838" stroke-width="1.05"/>
<rect x="806.5" y="254.5" width="15" height="15" rx="3" fill="#80ffe0" stroke="#383838" stroke-width="1.05"/>
<rect x="806.5" y="272.5" width="15" height="15" rx="3" fill="#c0fff0" stroke="#383838" stroke-width="1.05"/>
<rect x="806.5" y="290.5" width="15" height="15" rx="3" fill="#ffffff" stroke="#383838" stroke-width="1.05"/>
<rect x="824.5" y="218.5" width="15" height="15" rx="3" fill="#00c8f8" stroke="#383838" stroke-width="1.05"/>
<rect x="824.5" y="236.5" width="15" height="15" rx="3" fill="#20d0ff" stroke="#383838" stroke-width="1.05"/>
<rect x="824.5" y="254.5" width="15" height="15" rx="3" fill="#50d8ff" stroke="#383838" stroke-width="1.05"/>
<rect x="824.5" y="272.5" width="15" height="15" rx="3" fill="#80e0ff" stroke="#383838" stroke-width="1.05"/>
<rect x="824.5" y="290.5" width="15" height="15" rx="3" fill="#a8ecff" stroke="#383838" stroke-width="1.05"/>
<rect x="842.5" y="218.5" width="15" height="15" rx="3" fill="#0068f8" stroke="#383838" stroke-width="1.05"/>
<rect x="842.5" y="236.5" width="15" height="15" rx="3" fill="#3888ff" stroke="#383838" stroke-width="1.05"/>
<rect x="842.5" y="254.5" width="15" height="15" rx="3" fill="#68a0ff" stroke="#383838" stroke-width="1.05"/>
<rect x="842.5" y="272.5" width="15" height="15" rx="3" fill="#a0c4ff" stroke="#383838" stroke-width="1.05"/>
<rect x="842.5" y="290.5" width="15" height="15" rx="3" fill="#d8e8ff" stroke="#383838" stroke-width="1.05"/>
<rect x="860.5" y="218.5" width="15" height="15" rx="3" fill="#0008f0" stroke="#383838" stroke-width="1.05"/>
<rect x="860.5" y="236.5" width="15" height="15" rx="3" fill="#3038f8" stroke="#383838" stroke-width="1.05"/>
<rect x="860.5" y="254.5" width="15" height="15" rx="3" fill="#6068ff" stroke="#383838" stroke-width="1.05"/>
<rect x="860.5" y="272.5" width="15" height="15" rx="3" fill="#9098ff" stroke="#383838" stroke-width="1.05"/>
<rect x="860.5" y="290.5" width="15" height="15" rx="3" fill="#d0d4ff" stroke="#383838" stroke-width="1.05"/>
<rect x="878.5" y="218.5" width="15" height="15" rx="3" fill="#7010f8" stroke="#383838" stroke-width="1.05"/>
<rect x="878.5" y="236.5" width="15" height="15" rx="3" fill="#8840ff" stroke="#383838" stroke-width="1.05"/>
<rect x="878.5" y="254.5" width="15" height="15" rx="3" fill="#a070ff" stroke="#383838" stroke-width="1.05"/>
<rect x="878.5" y="272.5" width="15" height="15" rx="3" fill="#c0a0ff" stroke="#383838" stroke-width="1.05"/>
<rect x="878.5" y="290.5" width="15" height="15" rx="3" fill="#e8d8ff" stroke="#383838" stroke-width="1.05"/>
<rect x="896.5" y="218.5" width="15" height="15" rx="3" fill="#c810f8" stroke="#383838" stroke-width="1.05"/>
<rect x="896.5" y="236.5" width="15" height="15" rx="3" fill="#d848f8" stroke="#383838" stroke-width="1.05"/>
<rect x="896.5" y="254.5" width="15" height="15" rx="3" fill="#e078f8" stroke="#383838" stroke-width="1.05"/>
<rect x="896.5" y="272.5" width="15" height="15" rx="3" fill="#e8a8f8" stroke="#383838" stroke-width="1.05"/>
<rect x="896.5" y="290.5" width="15" height="15" rx="3" fill="#f8e0ff" stroke="#383838" stroke-width="1.05"/>
<rect x="914.5" y="218.5" width="15" height="15" rx="3" fill="#f818d8" stroke="#383838" stroke-width="1.05"/>
<rect x="914.5" y="236.5" width="15" height="15" rx="3" fill="#f850e0" stroke="#383838" stroke-width="1.05"/>
<rect x="914.5" y="254.5" width="15" height="15" rx="3" fill="#f878e0" stroke="#383838" stroke-width="1.05"/>
<rect x="914.5" y="272.5" width="15" height="15" rx="3" fill="#f8a8f0" stroke="#383838" stroke-width="1.05"/>
<rect x="914.5" y="290.5" width="15" height="15" rx="3" fill="#ffe0f8" stroke="#383838" stroke-width="1.05"/>
<rect x="932.5" y="218.5" width="15" height="15" rx="3" fill="#f01870" stroke="#383838" stroke-width="1.05"/>
<rect x="932.5" y="236.5" width="15" height="15" rx="3" fill="#f04888" stroke="#383838" stroke-width="1.05"/>
<rect x="932.5" y="254.5" width="15" height="15" rx="3" fill="#f070a0" stroke="#383838" stroke-width="1.05"/>
<rect x="932.5" y="272.5" width="15" height="15" rx="3" fill="#f890b8" stroke="#383838" stroke-width="1.05"/>
<rect x="932.5" y="290.5" width="15" height="15" rx="3" fill="#ffb0cc" stroke="#383838" stroke-width="1.05"/>
<rect x="662" y="290.5" width="16" height="16" rx="3" fill="none" stroke="#3a3a3a" stroke-width="3"/>
<rect x="807" y="180.5" width="32.5" height="33" rx="5" fill="url(#hatch)" stroke="#3c3c3c" stroke-width="1.2"/>
<rect x="842.5" y="180.5" width="33" height="33" rx="5" fill="#fff" stroke="#3c3c3c" stroke-width="1.2"/>
<path d="M849 207 L863 193.5" stroke="#6a6a6a" stroke-width="4.2" stroke-linecap="round"/><path d="M849 207 L863 193.5" stroke="#e4e4e4" stroke-width="2.2" stroke-linecap="round"/><circle cx="866" cy="190.6" r="4.6" fill="#d0d0d0" stroke="#6a6a6a" stroke-width="1"/>
<rect x="878.5" y="180.5" width="69" height="33" rx="5" fill="#fff" stroke="#3c3c3c" stroke-width="1.2"/>
<g transform="translate(957.9,625.8)" fill="#3a9ed8"><circle r="7"/>
<rect x="-1.6" y="-9.3" width="3.2" height="4.5" rx="1.5" transform="rotate(0)"/>
<rect x="-1.6" y="-9.3" width="3.2" height="4.5" rx="1.5" transform="rotate(45)"/>
<rect x="-1.6" y="-9.3" width="3.2" height="4.5" rx="1.5" transform="rotate(90)"/>
<rect x="-1.6" y="-9.3" width="3.2" height="4.5" rx="1.5" transform="rotate(135)"/>
<rect x="-1.6" y="-9.3" width="3.2" height="4.5" rx="1.5" transform="rotate(180)"/>
<rect x="-1.6" y="-9.3" width="3.2" height="4.5" rx="1.5" transform="rotate(225)"/>
<rect x="-1.6" y="-9.3" width="3.2" height="4.5" rx="1.5" transform="rotate(270)"/>
<rect x="-1.6" y="-9.3" width="3.2" height="4.5" rx="1.5" transform="rotate(315)"/>
<circle r="3.1" fill="#fff"/></g>
<g transform="translate(982.9,625.5)" fill="none" stroke-width="2.8">
<path d="M-3.6 -5.6 A6.6 6.6 0 0 0 -6.3 3.2" stroke="#1e6a82"/>
<path d="M-8.6 2.2 L-6.2 7 L-3.2 2.4 Z" fill="#1e6a82" stroke="none"/>
<path d="M-0.5 -6.6 A6.6 6.6 0 0 1 6.6 0.5" stroke="#18a6d8"/>
<path d="M-3 -6.2 L1.8 -9.2 L1.4 -3.4 Z" fill="#18a6d8" stroke="none"/>
<path d="M-4.5 6.2 A6.6 6.6 0 0 0 4.3 5" stroke="#88cce6"/>
<path d="M2.4 2.6 L7.2 1.8 L6.4 7.2 Z" fill="#88cce6" stroke="none"/>
</g>
<g fill="none" stroke="#505050" stroke-width="1.1">
<path d="M20.5 61.5 H30 L34 65.5 V76.5 H20.5 Z" fill="#fff"/>
<path d="M30 61.5 V65.5 H34" />
</g>
<g fill="none" stroke="#505050" stroke-width="1.1">
<path d="M44.5 75.5 V65.5 L46 64 H50 L51.5 65.5 H57 V68" fill="#f4f4f4"/>
<path d="M44.5 75.5 L49 68.5 H62 L58 75.5 Z" fill="#fff"/>
<path d="M53 63 Q57 58.5 61 62" />
</g>
<path d="M59.5 61 L62.5 64.5 L63 60 Z" fill="#3a3a3a"/>
<g fill="none" stroke="#505050" stroke-width="1">
<rect x="73.5" y="60.5" width="11" height="16" rx="1.5" fill="#fff" stroke="#707070"/>
</g>
<rect x="78" y="62.5" width="2" height="2" fill="#3a3a3a"/>
<path d="M75 69 V71 M83 69 V71 M75 74 V75.5 H76.5 M83 74 V75.5 H81.5" stroke="#777" stroke-width="0.8" fill="none"/>
<rect x="96.8" y="60.8" width="16.6" height="16" rx="1.6" fill="#fafafa" stroke="#6a6a6a" stroke-width="1.1"/>
<rect x="99.8" y="60.8" width="10.8" height="8.6" fill="#fff" stroke="#6a6a6a" stroke-width="1"/>
<rect x="101.2" y="62.8" width="8" height="3.8" fill="#86c8e0"/>
<path d="M100.3 76.8 V71.5 Q100.3 71 100.8 71 H108 Q108.5 71 108.5 71.5 V76.8" fill="#fff" stroke="#6a6a6a" stroke-width="1"/>
<rect x="102.6" y="73" width="1.2" height="3.5" fill="#555"/>
<path d="M124 61 H133.6 L137.6 65 V76.6 H124 Z" fill="#2a88b0"/>
<path d="M124.2 61.6 H133.2 L135.8 64.2 V76 H124.2 Z" fill="#5ebcde"/>
<rect x="125" y="63" width="10.4" height="2.8" fill="#e01010"/>
<text x="125.6" y="75" font-size="7" font-weight="bold" fill="#fff">3D</text>
<path d="M155.4 67 L159.4 60.6 H168.6 L165.7 67 Z" fill="#ececec" stroke="#505050" stroke-width="1"/>
<path d="M158 63 H166 M157 65 H165" stroke="#b0b0b0" stroke-width="0.8"/>
<path d="M153.5 67.5 H166.5 Q169 67.8 168.8 70.5 L167 75 Q166 77.5 163.5 77.5 H153.5 Q150.7 77.5 150.7 74.5 V71 Q150.8 67.6 153.5 67.5 Z" fill="#fff" stroke="#404040" stroke-width="1.1"/>
<rect x="151.5" y="68.2" width="16.5" height="2.3" fill="#707070"/>
<rect x="151.3" y="73.2" width="15.5" height="1.6" fill="#9a9a9a"/>
<rect x="161" y="71.6" width="2.8" height="2.8" fill="#38b0e0"/>

<rect x="177.3" y="62" width="17.3" height="7.4" rx="1" fill="#8a8a8a"/>
<rect x="180" y="63.3" width="11.5" height="5" fill="#fff"/>
<rect x="180.7" y="67.8" width="9.7" height="7.6" fill="#fff" stroke="#9a9a9a" stroke-width="0.9"/>
<path d="M188.5 69.5 L183.3 71.6 L188.5 73.8 M186.5 70.3 V72.9" fill="none" stroke="#2a2a2a" stroke-width="1.1"/>
<rect x="180.5" y="66.3" width="3.5" height="0.9" fill="#48b4dc"/>

<path d="M206.5 60.9 H213.2 L216.2 63.9 V72.3 H206.5 Z" fill="#fff" stroke="#c4c4c4" stroke-width="1"/>
<path d="M208.5 64.5 H211 M208.5 67 H212 M208.5 69.5 H211" stroke="#c8c8c8" stroke-width="0.9"/>
<path d="M212.3 65.9 H219.5 L223 69.4 V77.3 H212.3 Z" fill="#fff" stroke="#a8d4e2" stroke-width="1"/>
<path d="M214.5 69.5 H216.5 M214.5 72.3 H221 M214.5 74.8 H221" stroke="#c4dde6" stroke-width="0.9"/>

<rect x="232.6" y="62.6" width="15" height="12.6" rx="2" fill="#f0f0f0" stroke="#4a4a4a" stroke-width="1.2"/>
<path d="M235.8 65.2 L237.6 60.8 H244.4 L244.2 65.2 Z" fill="#fff" stroke="#4a4a4a" stroke-width="1.1"/>
<rect x="240" y="62" width="1.8" height="1.4" fill="#666"/>
<path d="M239.3 68.5 H246.8 L249.7 71.4 V77.1 H239.3 Z" fill="#fff" stroke="#2a7898" stroke-width="1.3"/>
<path d="M241 72.4 H243.5" stroke="#2a7898" stroke-width="1"/>
<rect x="240" y="74.3" width="9" height="2.2" fill="#9cc8d8"/>

<g stroke="#8ec4d8" stroke-width="1" fill="none">
<path d="M263 60 L268.5 71 M271 60 L265.5 71"/>
<circle cx="264" cy="74" r="2.8"/><circle cx="270.5" cy="74" r="2.8"/>
</g>
<path d="M291 69.5 Q295 62.5 299.5 63.5 Q303 64.5 302.5 69 Q302 71.5 300.5 72.5" fill="none" stroke="#3a3a3a" stroke-width="1.3"/>
<path d="M288 65.5 L288.5 71.5 L294 71 Z" fill="#3a3a3a"/>
<path d="M328.5 69.5 Q324.5 62.5 320 63.5 Q316.5 64.5 317 69 Q317.5 71.5 319 72.5" fill="none" stroke="#b8b8b8" stroke-width="1.3"/>
<path d="M331.5 65.5 L331 71.5 L325.5 71 Z" fill="#b8b8b8"/>
<path d="M347.3 77.2 Q345.5 73 342.8 69.8 Q341.3 67.8 343 67.2 Q344.5 66.8 346.6 69.2 L346.1 63.6 Q346 61.8 347.5 61.9 Q348.8 62.1 348.9 64 V61.8 Q349 59.6 350.6 59.8 Q352.1 60 352.1 62 V63.8 Q352.4 61.1 354 61.3 Q355.6 61.7 355.3 63.6 L355 67.4 Q356.5 64.2 358.2 64.3 Q359.9 64.9 358.8 66.6 Q356.2 70.8 355.4 77.2" fill="#fff" stroke="#3a3a3a" stroke-width="1"/>
<path d="M348.9 64 V68.5 M352.1 63.8 V68.3 M355 67.4 L354.8 69.5" fill="none" stroke="#3a3a3a" stroke-width="0.9"/>
<circle cx="375" cy="66.3" r="6.2" fill="#fff" stroke="#3a3a3a" stroke-width="1.2"/>
<path d="M379.4 70.7 L385.3 76.8" stroke="#3a3a3a" stroke-width="2.4"/>
<path d="M371.2 66.3 H378.8 M375 62.5 V70.1" stroke="#3a3a3a" stroke-width="2.1"/>
<circle cx="401" cy="66.3" r="6.2" fill="#fff" stroke="#3a3a3a" stroke-width="1.2"/>
<path d="M405.4 70.7 L411.3 76.8" stroke="#3a3a3a" stroke-width="2.4"/>
<path d="M397.2 66.3 H404.8" stroke="#3a3a3a" stroke-width="2.1"/>
<path d="M424.2 60.5 V62.6 M424.2 65.8 V67.8 M420.4 64.3 H422.5 M425.8 64.3 H427.8" stroke="#3a3a3a" stroke-width="1.1"/>
<circle cx="430.3" cy="70.4" r="3.9" fill="#fff" stroke="#3a3a3a" stroke-width="1.1"/>
<path d="M433 73.2 L436.2 76.4" stroke="#3a3a3a" stroke-width="1.9"/>
<circle cx="430.1" cy="70.3" r="1.3" fill="#3a3a3a"/>
<path d="M428.5 70.3 H431.7 M430.1 68.7 V71.9" stroke="#3a3a3a" stroke-width="0.8"/>
<path d="M455.1 60.7 L461.6 64.3 H458.3 V67.2 H463.6 L455.1 75.7 L446.1 67.2 H451.8 V64.3 H448.6 Z" fill="#fff" stroke="#505050" stroke-width="1" stroke-linejoin="miter"/>
<rect x="473" y="61.1" width="15.4" height="15" fill="#fafafa" stroke="#8a8a8a" stroke-width="1"/>
<rect x="474.5" y="62.6" width="12.4" height="12" fill="none" stroke="#d0d0d0" stroke-width="1.6"/>
<path d="M480.8 63.3 L478.9 66.1 H482.7 Z M480.8 74.4 L478.9 71.6 H482.7 Z M475.6 68.8 L478.4 66.9 V70.7 Z M486 68.8 L483.2 66.9 V70.7 Z" fill="#3a3a3a"/>
<path d="M480.8 66.1 L483.2 68.8 L480.8 71.6 L478.4 68.8 Z" fill="none" stroke="#a0a0a0" stroke-width="0.7"/>
<g transform="rotate(-42 534 66)">
<path d="M529 61.5 H537 Q540 61.5 540 64.5 V67.5 Q540 70.5 537 70.5 H529" fill="none" stroke="#3a6e80" stroke-width="1"/>
<ellipse cx="529" cy="66" rx="2.3" ry="4.5" fill="#90d0e6" stroke="#3a6e80" stroke-width="1"/>
</g>
<path d="M525 75.3 Q528 73.3 531.2 73.4 L532.6 70.2 L534.2 73.6 Q536.6 74.3 537.3 76.3 Q531 77.2 525 75.3 Z" fill="#3ab0d8"/>
<defs><linearGradient id="gradIc" x1="0" y1="0" x2="0" y2="1"><stop offset="0" stop-color="#62c0e2"/><stop offset="0.3" stop-color="#72c6e4"/><stop offset="0.45" stop-color="#e6e6e2"/><stop offset="0.8" stop-color="#eeeeee"/><stop offset="1" stop-color="#ffffff"/></linearGradient></defs>
<rect x="551.5" y="62.4" width="15" height="13" rx="0.8" fill="url(#gradIc)" stroke="#666" stroke-width="1.2"/>
<rect x="577.5" y="62.5" width="15" height="13.5" fill="#fff" stroke="#5a5a5a" stroke-width="1"/>
<circle cx="580" cy="65" r="1.2" fill="#48b4dc"/>
<circle cx="585" cy="65" r="1.2" fill="#48b4dc"/>
<circle cx="590" cy="65" r="1.2" fill="#48b4dc"/>
<circle cx="582.5" cy="69.3" r="1.2" fill="#48b4dc"/>
<circle cx="587.5" cy="69.3" r="1.2" fill="#48b4dc"/>
<circle cx="580" cy="73.5" r="1.2" fill="#48b4dc"/>
<circle cx="585" cy="73.5" r="1.2" fill="#48b4dc"/>
<circle cx="590" cy="73.5" r="1.2" fill="#48b4dc"/>
<polygon points="615.80,63.20 622.55,68.11 619.97,76.04 611.63,76.04 609.05,68.11" fill="#707070" opacity="0.55"/>
<polygon points="614.30,61.90 621.05,66.81 618.47,74.74 610.13,74.74 607.55,66.81" fill="#3aa2cc" stroke="#2a4a5a" stroke-width="0.9"/>
<polygon points="639.80,62.20 646.74,67.24 644.09,75.41 635.51,75.41 632.86,67.24" fill="#fff" stroke="#505050" stroke-width="1.1"/>
<path d="M636.5 66 L642.5 67.5 L636.5 69.5 L643 71 L636.5 73" fill="none" stroke="#555" stroke-width="1"/>
<ellipse cx="666.00" cy="62.50" rx="1.5" ry="1.2" fill="#fff" stroke="#48b4dc" stroke-width="0.9"/>
<ellipse cx="669.41" cy="64.81" rx="1.5" ry="1.2" fill="#fff" stroke="#48b4dc" stroke-width="0.9"/>
<ellipse cx="672.66" cy="67.34" rx="1.5" ry="1.2" fill="#fff" stroke="#48b4dc" stroke-width="0.9"/>
<ellipse cx="671.52" cy="71.29" rx="1.5" ry="1.2" fill="#fff" stroke="#48b4dc" stroke-width="0.9"/>
<ellipse cx="670.11" cy="75.16" rx="1.5" ry="1.2" fill="#fff" stroke="#48b4dc" stroke-width="0.9"/>
<ellipse cx="666.00" cy="75.30" rx="1.5" ry="1.2" fill="#fff" stroke="#48b4dc" stroke-width="0.9"/>
<ellipse cx="661.89" cy="75.16" rx="1.5" ry="1.2" fill="#fff" stroke="#48b4dc" stroke-width="0.9"/>
<ellipse cx="660.48" cy="71.29" rx="1.5" ry="1.2" fill="#fff" stroke="#48b4dc" stroke-width="0.9"/>
<ellipse cx="659.34" cy="67.34" rx="1.5" ry="1.2" fill="#fff" stroke="#48b4dc" stroke-width="0.9"/>
<ellipse cx="662.59" cy="64.81" rx="1.5" ry="1.2" fill="#fff" stroke="#48b4dc" stroke-width="0.9"/>
<polygon points="691.50,62.00 698.63,67.18 695.91,75.57 687.09,75.57 684.37,67.18" fill="#fff" stroke="#505050" stroke-width="1"/>
<path d="M691.5 62.5 V65 M685.5 67 L687.5 68 M697.5 67 L695.5 68" stroke="#aaa" stroke-width="0.8"/>
<path d="M692 69 L699 76" stroke="#3aaed8" stroke-width="1.8"/><circle cx="691.5" cy="69" r="1.8" fill="#3aaed8"/>
<polygon points="718.00,61.50 725.61,67.03 722.70,75.97 713.30,75.97 710.39,67.03" fill="none" stroke="#c8c8c8" stroke-width="0.8"/>
<polygon points="718.00,64.50 723.23,68.30 721.23,74.45 714.77,74.45 712.77,68.30" fill="#fff" stroke="#303030" stroke-width="1.2"/>
<path d="M720 66 L725 61.5" stroke="#3aaed8" stroke-width="1.2"/><path d="M726 60.5 L721.5 61.5 L725 65 Z" fill="#3aaed8"/>
<path d="M740 63.5 H753" stroke="#ffb468" stroke-width="1"/><path d="M740 66.8 H753" stroke="#ff6a6a" stroke-width="1.8"/><path d="M740 70.2 H753" stroke="#3aa8e0" stroke-width="1.3"/><path d="M740 73.8 H753.5" stroke="#18b818" stroke-width="2.3" stroke-linecap="round"/>
<path d="M765.5 63.5 H780" stroke="#555" stroke-width="1" stroke-dasharray="1 1"/><path d="M765.5 66.8 H780" stroke="#666" stroke-width="1.8" stroke-dasharray="3 1.5"/><path d="M765.5 70.2 H780" stroke="#444" stroke-width="1.2"/><path d="M765.5 73.8 H780" stroke="#333" stroke-width="2.2" stroke-linecap="round"/>
<text x="802.4" y="74.2" style="font-family:'Liberation Serif',serif" font-size="16.8" fill="#333" stroke="#333" stroke-width="0.55" text-anchor="middle">A</text>
<g transform="translate(830.7,68.9)" fill="#fff" stroke="#4a4a4a" stroke-width="0.95" stroke-linejoin="round">
<path d="M0 -8.6 L3 -4.6 L1.3 -3.7 L1.1 -1.5 L-1.1 -1.5 L-1.3 -3.7 L-3 -4.6 Z" transform="rotate(0)"/>
<path d="M0 -8.6 L3 -4.6 L1.3 -3.7 L1.1 -1.5 L-1.1 -1.5 L-1.3 -3.7 L-3 -4.6 Z" transform="rotate(90)"/>
<path d="M0 -8.6 L3 -4.6 L1.3 -3.7 L1.1 -1.5 L-1.1 -1.5 L-1.3 -3.7 L-3 -4.6 Z" transform="rotate(180)"/>
<path d="M0 -8.6 L3 -4.6 L1.3 -3.7 L1.1 -1.5 L-1.1 -1.5 L-1.3 -3.7 L-3 -4.6 Z" transform="rotate(270)"/>
</g>
<path d="M858.15 75.79 A7.2 7.2 0 1 0 853.16 65.10 L847.7 67.2 L852.4 73.7 L856.8 67.8 L855.45 67.26 A4.2 4.2 0 1 1 858.67 72.84 A1.5 1.5 0 0 0 858.15 75.79 Z" fill="#fff" stroke="#4a4a4a" stroke-width="0.95" stroke-linejoin="round"/>
<rect x="876" y="61" width="14.6" height="16" fill="none" stroke="#4a9ab8" stroke-width="1" stroke-dasharray="1.1 1.2"/>
<rect x="880.4" y="65.6" width="5.4" height="6.8" fill="#fff" stroke="#505050" stroke-width="0.95"/>
<path d="M885.8 65.6 L887 64.2 M880.4 72.4 L879.4 73.6" stroke="#505050" stroke-width="0.9"/>
<path d="M890 61.2 L885.5 62.6 L888.6 65.7 Z M876.6 76.8 L877.8 72.3 L881 75.5 Z" fill="#fff" stroke="#505050" stroke-width="0.95" stroke-linejoin="round"/>
<path d="M901.5 76 L911 61.5 H916.5 L907 76 Z" fill="#fff" stroke="#404040" stroke-width="0.9"/>
<path d="M901.5 62 H904 V66" fill="none" stroke="#e8e8e8" stroke-width="0.8"/>
<rect x="928.2" y="64.3" width="3.3" height="9" fill="#fff" stroke="#404040" stroke-width="0.9"/>
<rect x="933.6" y="66.5" width="2.9" height="4.4" fill="#fff" stroke="#404040" stroke-width="0.9"/>
<rect x="938.4" y="61.6" width="3.4" height="14.6" fill="#fff" stroke="#404040" stroke-width="0.9"/>
<path d="M926.5 68.8 H927.5 M942.5 68.8 H943.5" stroke="#808080" stroke-width="0.9"/>
<path d="M961.00 63.30 Q960.62 61.31 963.94 60.82 Q964.50 63.78 964.60 64.61 Q965.59 62.84 968.45 64.60 Q966.97 67.22 966.51 67.93 Q968.41 67.21 969.47 70.39 Q966.65 71.45 965.85 71.70 Q967.76 72.37 966.53 75.49 Q963.69 74.49 962.92 74.16 Q963.95 75.90 961.00 77.50 Q959.47 74.91 959.08 74.16 Q958.76 76.16 955.47 75.49 Q955.96 72.52 956.15 71.70 Q954.62 73.02 952.53 70.39 Q954.82 68.43 955.49 67.93 Q953.46 67.96 953.55 64.60 Q956.56 64.57 957.40 64.61 Q955.83 63.33 958.06 60.82 Q960.39 62.73 961.00 63.30 Z" fill="#fff" stroke="#404040" stroke-width="0.85"/>
<ellipse cx="961" cy="68.9" rx="2.4" ry="8" transform="rotate(35 961 68.9)" fill="#fff" stroke="#404040" stroke-width="0.9"/>
<path d="M959.5 71.4 L962.5 66.4" stroke="#909090" stroke-width="0.7"/>
<path d="M979.5 65 H988.5 L984 72.8 Z" fill="#7c7c7c"/>
<path d="M18.8 92.8 L31.5 97.9 L29.1 100.6 L35.6 107 L33.6 109.2 L27 102.8 L24.2 104.9 Z" fill="none" stroke="#3a7080" stroke-width="1.1" stroke-linejoin="round"/>
<path d="M24.3 120.6 H31.5 M24.3 120.6 L20 126 L22.3 132.2" fill="none" stroke="#404040" stroke-width="0.9"/>
<rect x="22.8" y="119.1" width="3" height="3" fill="#48b8dc"/><rect x="30" y="119.1" width="3" height="3" fill="#48b8dc"/>
<rect x="18.5" y="124.5" width="3" height="3" fill="#48b8dc"/><rect x="20.8" y="130.7" width="3" height="3" fill="#48b8dc"/>
<path d="M24.7 124 L33 127.5 L31.2 129.3 L35.3 133.3 L33.8 134.8 L29.8 130.8 L28 132.6 Z" fill="#fff" stroke="#404040" stroke-width="1" stroke-linejoin="round"/>
<path d="M20.7 162.9 L33 149.4" stroke="#5a5a5a" stroke-width="1.2"/>
<rect x="19.7" y="176.7" width="14" height="10.3" rx="1" fill="none" stroke="#5a5a5a" stroke-width="1.2"/>
<rect x="19.7" y="202.4" width="14" height="10.3" rx="3" fill="none" stroke="#5a5a5a" stroke-width="1.2"/>
<ellipse cx="26.6" cy="233.6" rx="7.1" ry="5.3" fill="none" stroke="#5a5a5a" stroke-width="1.2"/>
<path d="M25.6 255.5 L34 259.8 L19.8 265.6 L28 270.2 Z" fill="none" stroke="#404040" stroke-width="1"/>
<polyline points="26.60,288.10 27.76,288.09 28.89,288.06 29.96,288.00 30.95,287.88 31.83,287.70 32.58,287.45 33.19,287.12 33.65,286.71 33.94,286.22 34.09,285.67 34.07,285.07 33.92,284.43 33.64,283.79 33.25,283.15 32.77,282.55 32.22,282.00 31.63,281.55 31.01,281.20 30.39,280.98 29.80,280.91 29.24,280.99 28.72,281.24 28.27,281.65 27.87,282.22 27.54,282.94 27.27,283.80 27.05,284.77 26.88,285.83 26.73,286.95 26.60,288.10 26.47,289.25 26.32,290.37 26.15,291.43 25.93,292.40 25.66,293.26 25.33,293.98 24.93,294.55 24.48,294.96 23.96,295.21 23.40,295.29 22.81,295.22 22.19,295.00 21.57,294.65 20.98,294.20 20.43,293.65 19.95,293.05 19.56,292.41 19.28,291.77 19.13,291.13 19.11,290.53 19.26,289.98 19.55,289.49 20.01,289.08 20.62,288.75 21.37,288.50 22.25,288.32 23.24,288.20 24.31,288.14 25.44,288.11 26.60,288.10" fill="none" stroke="#404040" stroke-width="1.1"/>
<path d="M21.8 314.5 L26.2 306.5" stroke="#40b0d8" stroke-width="2.6"/>
<path d="M21.8 315 L21.3 316.5" stroke="#c8e0ea" stroke-width="2"/>
<path d="M20 319 L22 321 L24 318.5 L26 321 L28 318.5 L30 320.5 L32 318 L34.5 318.5" fill="none" stroke="#404040" stroke-width="0.9"/>
<path d="M21.5 341.8 L25.9 333" stroke="#f88808" stroke-width="2.7" stroke-linecap="round"/>
<path d="M21.2 343 L20.8 344" stroke="#c8dcea" stroke-width="2"/>
<path d="M20 345 Q22 350 25.5 349 Q29 347.5 30.5 346 Q32.5 344.5 34.5 344.5" fill="none" stroke="#505050" stroke-width="1.1"/>
<path d="M20 376.5 L25 362.5 M20 376.5 H34.5" stroke="#e4e4e4" stroke-width="0.9" fill="none"/>
<path d="M25 362.5 Q33 365 34.5 376" fill="none" stroke="#404040" stroke-width="1.1"/>

<polygon points="27.00,389.20 33.47,393.90 31.00,401.50 23.00,401.50 20.53,393.90" fill="#fff" stroke="#404040" stroke-width="1.1"/>
<text x="25.6" y="430" style="font-family:'Liberation Serif',serif" font-size="15.5" fill="#3a3a3a" stroke="#3a3a3a" stroke-width="0.35" text-anchor="middle">A</text>
<path d="M32.5 419 V431 M31 419 H34 M31 431 H34" stroke="#40b0d8" stroke-width="1"/>
<path d="M19.3 457.3 L22.8 451.6 L30.7 447.3 Q31.5 446.9 32.3 447.3 L35.3 449.3 Q35.7 449.6 35.6 450.2 L35.4 453 L24.1 460.1 Q23.3 460.5 22.6 460.1 Z" fill="#fff" stroke="#404040" stroke-width="0.9" stroke-linejoin="round"/>
<path d="M22.8 451.6 L25.5 453.4 L35.4 449.7 M25.5 453.4 L23.9 460" fill="none" stroke="#404040" stroke-width="0.9"/>
<path d="M25 480.5 L30.6 472.2 Q31.6 471.2 32.6 472 L33.3 472.7 Q33.8 473.5 33.2 474.4 L27.6 482.3 Z" fill="#fff" stroke="#404040" stroke-width="0.9" stroke-linejoin="round"/>
<path d="M25 480.5 L21.2 488.2 L27.6 482.3" fill="#fff" stroke="#404040" stroke-width="0.9" stroke-linejoin="round"/>
<rect x="20" y="521" width="14.5" height="10.5" fill="#8ccfe6" stroke="#4a8ea4" stroke-width="1.8"/>
<path d="M19 546 Q23 544 27 546.5 Q31 544 35 546 V557 Q31 555.5 27 558 Q23 555.5 19 557 Z" fill="#fff" stroke="#505050" stroke-width="1"/>
<path d="M27 546.5 V558 M21 549 H25 M21 551.5 H25 M21 554 H25 M29 549 H33 M29 551.5 H33 M29 554 H33" stroke="#888" stroke-width="0.8" fill="none"/>
<path d="M22.8 570.6 L30.6 575 L22.8 579.4 Z" fill="#808080"/>

<g fill="none" stroke="#b8b8b8" stroke-width="1.1">
<rect x="20.2" y="621.2" width="8.5" height="7.5"/><rect x="25.1" y="624.8" width="8.5" height="7.5"/>
</g>
<rect x="18.099999999999998" y="619.2" width="3.6" height="3.6" fill="#a8dae6"/>
<rect x="32.300000000000004" y="619.2" width="3.6" height="3.6" fill="#a8dae6"/>
<rect x="18.099999999999998" y="630.8000000000001" width="3.6" height="3.6" fill="#a8dae6"/>
<rect x="32.300000000000004" y="630.8000000000001" width="3.6" height="3.6" fill="#a8dae6"/>
<g fill="none" stroke="#b8b8b8" stroke-width="1.1">
<rect x="45.7" y="621.2" width="9.3" height="7.5"/><rect x="50.9" y="624.8" width="9.3" height="7.8"/>
</g>
<rect x="43.900000000000006" y="619.2" width="3.6" height="3.6" fill="#a8dae6"/>
<rect x="53.2" y="619.2" width="3.6" height="3.6" fill="#a8dae6"/>
<rect x="43.900000000000006" y="626.8000000000001" width="3.6" height="3.6" fill="#a8dae6"/>
<rect x="53.2" y="626.8000000000001" width="3.6" height="3.6" fill="#a8dae6"/>
<rect x="49.1" y="623.0" width="3.6" height="3.6" fill="#a8dae6"/>
<rect x="58.400000000000006" y="623.0" width="3.6" height="3.6" fill="#a8dae6"/>
<rect x="49.1" y="630.8000000000001" width="3.6" height="3.6" fill="#a8dae6"/>
<rect x="58.400000000000006" y="630.8000000000001" width="3.6" height="3.6" fill="#a8dae6"/>
<g fill="none" stroke="#2e7890" stroke-width="1.2">
<rect x="74.1" y="620.7" width="8.6" height="7.2"/><rect x="79.2" y="625.7" width="8.4" height="7"/>
<path d="M83 620.7 H87.6 V625.2 M74.1 628 V632.7 H79" stroke-dasharray="1.3 1.1"/>
<path d="M87.6 632.7 h2.6 v2.6 h-2.6 z" stroke-width="1"/>
</g>
<g fill="none" stroke="#b4dae6" stroke-width="1.1">
<rect x="100.5" y="620.7" width="8.7" height="7.3"/><rect x="105.1" y="625.7" width="8.8" height="7.3"/>
</g>
<g fill="none" stroke="#2a6c84" stroke-width="1.2">
<rect x="126.4" y="620.7" width="8.8" height="7.3"/><rect x="131.4" y="625.7" width="8.4" height="7.3" fill="#5ab6d6"/>
<path d="M139.8 633 h2.6 v2.6 h-2.6 z" stroke-width="1"/>
</g>
<g fill="#fff" stroke="#a4a4a4" stroke-width="0.9">
<path d="M155.2 621.2 L159.5 618.9 L164.2 621.2 V628 L159.5 630.5 L155.2 627.9 Z M155.2 621.2 L159.5 623.5 L164.2 621.2"/>
</g>
<g fill="#fff" stroke="#9ed2e4" stroke-width="0.9">
<path d="M161.4 625.1 L166.3 622.3 L170.6 625.1 V631.5 L166.3 633.6 L161.4 631.5 Z M161.4 625.1 L166.3 627.5 L170.6 625.1"/>
</g>
<path d="M182 620 Q189.5 620.5 195.8 634 M196 620 Q188.5 620.5 182.2 634" fill="none" stroke="#a8a8a8" stroke-width="0.9"/>
<g stroke="#a8a8a8" stroke-width="0.9">
<rect x="210.9" y="619.9" width="6.7" height="6.7" fill="#e0e0e0"/><rect x="218.2" y="627.2" width="6.7" height="6.7" fill="#e0e0e0"/>
<rect x="214.3" y="623.3" width="7" height="7" rx="1" fill="#fff"/>
<path d="M240.3 626.6 V630.3 H244.2 M243.7 623.3 H247.3 V627.2" fill="none"/>
<rect x="237" y="619.9" width="6.7" height="6.7" fill="#e0e0e0"/><rect x="244.2" y="627.2" width="6.7" height="6.7" fill="#e0e0e0"/>
</g>
<path d="M265.2 625.1 H271.3 A4.8 4.8 0 1 1 277.5 629.5 V633.6 H265.2 Z" fill="#efefef" stroke="#c8c8c8" stroke-width="0.9"/>
<circle cx="299.2" cy="627.2" r="6.7" fill="#fff" stroke="#4a4a4a" stroke-width="1"/>
<circle cx="299.2" cy="627.2" r="4.5" fill="none" stroke="#34aad8" stroke-width="1.8"/>
<ellipse cx="299.2" cy="627.2" rx="1.7" ry="2.6" fill="none" stroke="#3a3a3a" stroke-width="1.1"/>
<path d="M318.9 634.6 L325 624 L331.4 634.6 Z" fill="#d2ecf6"/>
<path d="M323 632.3 L332 623" stroke="#b8b8b8" stroke-width="2.8" stroke-linecap="round"/><path d="M323 632.3 L332 623" stroke="#f0f0f0" stroke-width="1.4" stroke-linecap="round"/>
<circle cx="333.9" cy="621.5" r="3.4" fill="#ececec" stroke="#b8b8b8" stroke-width="0.8"/>
<path d="M352.2 624 L359.4 619.8 V629 L352.2 632.6 Z" fill="#fff" stroke="#3a3a3a" stroke-width="0.9"/>
<path d="M354.4 626 L361.9 621.5 V630.1 L354.4 634.3 Z" fill="#fff" stroke="#3a3a3a" stroke-width="0.9"/>
<path d="M355.8 627 L360.6 624 V629.5 L355.8 632.4 Z" fill="#3ab0d8"/>

</svg></body></html>
